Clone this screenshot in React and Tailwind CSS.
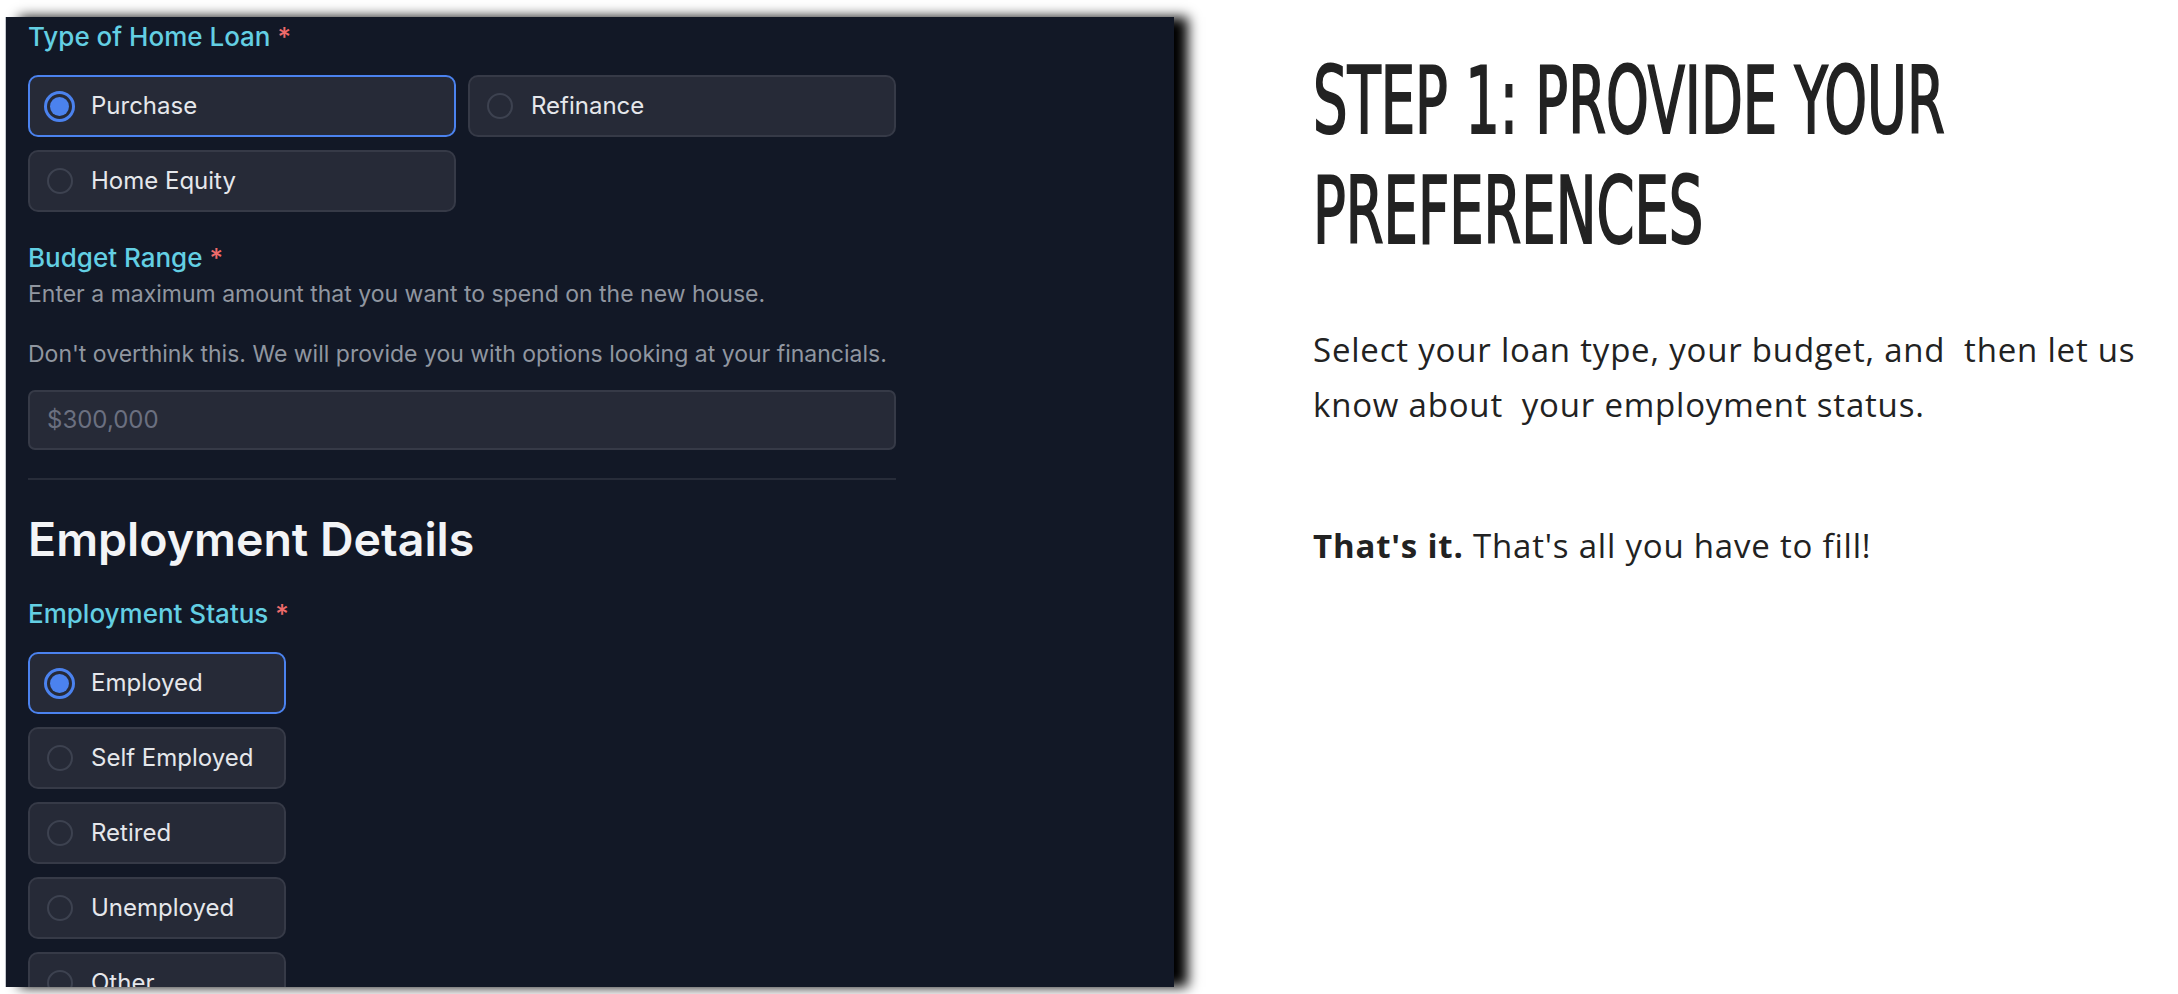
import React from 'react';

const LOAN_TYPES = [
  { label: 'Purchase', checked: true },
  { label: 'Refinance', checked: false },
  { label: 'Home Equity', checked: false },
];

const EMPLOYMENT = [
  { label: 'Employed', checked: true },
  { label: 'Self Employed', checked: false },
  { label: 'Retired', checked: false },
  { label: 'Unemployed', checked: false },
  { label: 'Other', checked: false },
];

const Label = ({ children, className = '' }) => (
  <p className={`text-[26px] leading-[39px] font-medium text-[#63cfe3] ${className}`}>
    {children} <span className="text-[#ef6b6b]">*</span>
  </p>
);

const RadioBox = ({ label, checked, className = '' }) => (
  <div
    className={`flex items-center h-[62px] rounded-[10px] bg-[#262a37] border-2 ${
      checked ? 'border-[#4b82ee]' : 'border-[#363a47]'
    } ${className}`}
  >
    <span className="ml-[14px] w-[31px] h-[31px] flex items-center justify-center shrink-0">
      {checked ? (
        <span className="w-[31px] h-[31px] rounded-full border-[3px] border-[#4b82ee] flex items-center justify-center">
          <span className="w-[19px] h-[19px] rounded-full bg-[#4b82ee]"></span>
        </span>
      ) : (
        <span className="w-[26px] h-[26px] rounded-full border-2 border-[#3d4250]"></span>
      )}
    </span>
    <span className="ml-[16px] text-[24px] text-[#e5e7eb] whitespace-nowrap">{label}</span>
  </div>
);

const App = () => {
  return (
    <div className="w-full h-[994px] bg-white flex overflow-hidden">
      <div className="pt-[17px] pl-[5px] shrink-0">
        <div
          className="w-[1169px] h-[970px] bg-[#121826] border-l border-[#c3c6cc] overflow-hidden pl-[22px] shadow-[14px_0_12px_rgba(0,0,0,1)]"
          style={{ fontFamily: 'Inter, "Noto Sans", sans-serif' }}
        >
          <div className="w-[868px]">
            <Label>Type of Home Loan</Label>
            <div className="grid grid-cols-2 gap-x-[12px] gap-y-[13px] mt-[19px]">
              {LOAN_TYPES.map((item) => (
                <RadioBox key={item.label} label={item.label} checked={item.checked} />
              ))}
            </div>

            <Label className="mt-[26px]">Budget Range</Label>
            <p className="mt-[2px] text-[23px] leading-[30px] text-[#9096a0] whitespace-pre-line">
              {'Enter a maximum amount that you want to spend on the new house.\n\nDon\'t overthink this. We will provide you with options looking at your financials.'}
            </p>
            <div className="mt-[21px] h-[60px] rounded-[7px] bg-[#262a37] border-2 border-[#363a47] flex items-center pl-[17px]">
              <span className="text-[24px] text-[#6b7080]">$300,000</span>
            </div>

            <div className="mt-[28px] h-[2px] bg-[#272c39]"></div>

            <h2 className="mt-[31px] text-[46.5px] leading-[56px] font-semibold text-[#f3f4f6]">
              Employment Details
            </h2>

            <Label className="mt-[27px]">Employment Status</Label>
            <div className="mt-[19px] flex flex-col gap-[13px] w-[258px]">
              {EMPLOYMENT.map((item) => (
                <RadioBox key={item.label} label={item.label} checked={item.checked} />
              ))}
            </div>
          </div>
        </div>
      </div>

      <div className="ml-[139px] pt-[46px] w-[850px] shrink-0 text-[#222222]">
        <h1
          className="text-[93px] leading-[110px] font-normal uppercase origin-left scale-x-[0.65] whitespace-nowrap [-webkit-text-stroke:2px_#222222]"
          style={{ fontFamily: '"DejaVu Sans Condensed", "DejaVu Sans", sans-serif' }}
        >
          STEP 1: PROVIDE YOUR
          <br />
          PREFERENCES
        </h1>
        <div style={{ fontFamily: '"Open Sans", "Noto Sans", sans-serif' }}>
          <p className="mt-[56px] text-[33px] leading-[55px] tracking-[0.8px] whitespace-pre-wrap">
            {'Select your loan type, your budget, and  then let us know about  your employment status.'}
          </p>
          <p className="mt-[86px] text-[33px] leading-[55px] tracking-[0.8px]">
            <span className="font-bold">That's it.</span> That's all you have to fill!
          </p>
        </div>
      </div>
    </div>
  );
};

export default App;
